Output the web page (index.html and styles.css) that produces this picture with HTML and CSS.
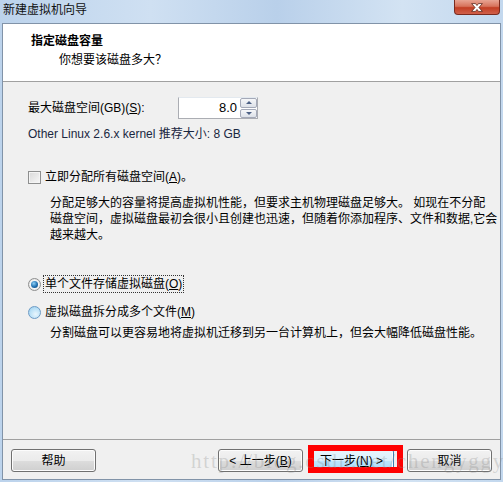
FILE: index.html
```html
<!DOCTYPE html>
<html>
<head>
  <meta charset="utf-8">
  <title>新建虚拟机向导</title>
  <link rel="stylesheet" href="styles.css">
</head>
<body>
  <div class="window">
    <div class="titleBar">
      <span class="title">新建虚拟机向导</span>
      <span class="closeButton">
        <svg width="45" height="15" viewBox="0 0 45 15">
          <path d="M17 3.5 L21 3.5 L22.5 5.5 L24 3.5 L28 3.5 L24.5 7.5 L28 11.5 L24 11.5 L22.5 9.5 L21 11.5 L17 11.5 L20.5 7.5 Z" fill="#ffffff" stroke="#5a2418" stroke-width="0.8" stroke-linejoin="round"/>
        </svg>
      </span>
    </div>

    <div class="client">
      <div class="header">
        <h1 class="heading">指定磁盘容量</h1>
        <p class="subheading">你想要该磁盘多大？</p>
      </div>

      <div class="content">
        <div class="sizeRow">
          <span class="sizeLabel">最大磁盘空间(GB)(<u>S</u>):</span>
          <div class="spin">
            <span class="spinValue">8.0</span>
            <span class="spinButtons">
              <span class="spinButton"><span class="arrowUp"></span></span>
              <span class="spinButton"><span class="arrowDown"></span></span>
            </span>
          </div>
        </div>
        <p class="hint">Other Linux 2.6.x kernel 推荐大小: 8 GB</p>

        <div class="option checkOption">
          <span class="checkbox"></span>
          <span class="optionLabel">立即分配所有磁盘空间(<u>A</u>)。</span>
        </div>
        <p class="desc">分配足够大的容量将提高虚拟机性能，但要求主机物理磁盘足够大。 如现在不分配<br>磁盘空间，虚拟磁盘最初会很小且创建也迅速，但随着你添加程序、文件和数据,它会<br>越来越大。</p>

        <div class="option radioFirst">
          <span class="radio radioOn"><span class="radioDot"></span></span>
          <span class="optionLabel focused">单个文件存储虚拟磁盘(<u>O</u>)</span>
        </div>
        <div class="option radioSecond">
          <span class="radio radioOff"></span>
          <span class="optionLabel">虚拟磁盘拆分成多个文件(<u>M</u>)</span>
        </div>
        <p class="desc descShort">分割磁盘可以更容易地将虚拟机迁移到另一台计算机上，但会大幅降低磁盘性能。</p>
      </div>

      <div class="footer">
        <button class="button">帮助</button>
        <div class="navButtons">
          <button class="button">&lt; 上一步(<u>B</u>)</button>
          <button class="button nextButton">下一步(<u>N</u>) &gt;</button>
          <button class="button cancelButton">取消</button>
        </div>
      </div>
    </div>

    <div class="watermark">http://blog.csdn.net/chengyggy</div>
  </div>
</body>
</html>
```

FILE: styles.css
```css
*,
*::before,
*::after {
  margin: 0;
  padding: 0;
  box-sizing: border-box;
}

body {
  width: 503px;
  height: 482px;
  overflow: hidden;
  font-family: "Liberation Sans", "Noto Sans CJK SC", sans-serif;
  font-size: 12px;
  line-height: 16px;
  color: #000;
}

.window {
  position: relative;
  width: 503px;
  height: 482px;
  background: linear-gradient(90deg, #bcd3ec 0%, #cfe0f2 30%, #b9d0ea 55%, #d3e3f3 80%, #c3d8ee 100%);
}

/* title bar */
.titleBar {
  height: 23px;
  display: flex;
  justify-content: space-between;
  align-items: flex-start;
}

.title {
  padding-left: 3px;
  padding-top: 2px;
  font-size: 12px;
  line-height: 16px;
  color: #111;
}

.closeButton {
  width: 46px;
  height: 15px;
  margin-right: 3px;
  border: 1px solid #7a2a1e;
  border-top: none;
  border-radius: 0 0 4px 4px;
  background: linear-gradient(#e8a493 0%, #d7735c 45%, #c23e24 55%, #d0604a 100%);
  display: flex;
  align-items: center;
  justify-content: center;
}

.closeButton svg {
  display: block;
}

/* client area */
.client {
  width: 499px;
  height: 457px;
  margin-left: 2px;
  border: 1px solid #8193a8;
  background-color: #f0f0f0;
  display: flex;
  flex-direction: column;
}

.header {
  height: 58px;
  background-color: #fff;
  border-bottom: 1px solid #a0a0a0;
  padding-top: 9px;
}

.heading {
  font-size: 12px;
  font-weight: bold;
  line-height: 16px;
  margin-left: 28px;
}

.subheading {
  margin-top: 3px;
  margin-left: 56px;
}

.content {
  flex: 1;
  padding-top: 15px;
  padding-left: 25px;
}

.sizeRow {
  display: flex;
  align-items: center;
  height: 22px;
}

.sizeLabel {
  width: 150px;
}

.spin {
  display: flex;
  height: 22px;
  width: 80px;
  border: 1px solid #abadb3;
  border-top-color: #e3e9ef;
  background-color: #fff;
}

.spinValue {
  flex: 1;
  text-align: right;
  padding-right: 3px;
  line-height: 20px;
  font-size: 13px;
}

.spinButtons {
  width: 17px;
  display: flex;
  flex-direction: column;
  gap: 1px;
  background-color: #fff;
}

.spinButton {
  flex: 1;
  border: 1px solid #a4a9b8;
  border-radius: 2px;
  background: linear-gradient(#f6f7f9, #dde1e8);
  display: flex;
  align-items: center;
  justify-content: center;
}

.arrowUp {
  border-left: 3px solid transparent;
  border-right: 3px solid transparent;
  border-bottom: 3px solid #4d6185;
}

.arrowDown {
  border-left: 3px solid transparent;
  border-right: 3px solid transparent;
  border-top: 3px solid #4d6185;
}

.hint {
  margin-top: 7px;
  color: #1a2740;
}

.option {
  display: flex;
  align-items: center;
  height: 16px;
}

.checkOption {
  margin-top: 27px;
}

.checkbox {
  width: 13px;
  height: 13px;
  border: 1px solid #8e8f8f;
  background: linear-gradient(135deg, #d9d9d9, #f7f7f7);
  box-shadow: inset 0 0 0 1px #f4f4f4;
  margin-right: 3px;
}

.optionLabel {
  padding: 0 1px;
}

.focused {
  outline: 1px dotted #333;
  outline-offset: 0;
  line-height: 16px;
}

.desc {
  margin-top: 10px;
  margin-left: 22px;
}

.radioFirst {
  margin-top: 33px;
}

.radioSecond {
  margin-top: 12px;
}

.descShort {
  margin-top: 5px;
}

.radio {
  width: 13px;
  height: 13px;
  border-radius: 50%;
  margin-right: 3px;
  display: flex;
  align-items: center;
  justify-content: center;
}

.radioOn {
  border: 1px solid #8e8f8f;
  background: radial-gradient(circle, #ffffff 40%, #cfcfcf 100%);
}

.radioDot {
  width: 7px;
  height: 7px;
  border-radius: 50%;
  background: radial-gradient(circle at 40% 35%, #8fd0f5 0%, #1f6fb0 55%, #0c3a6b 100%);
}

.radioOff {
  border: 1px solid #6d9bc5;
  background: radial-gradient(circle at 60% 65%, #e9f6fd 0%, #b7dff6 60%, #8ec6ea 100%);
}

/* footer buttons */
.footer {
  height: 40px;
  border-top: 1px solid #a0a0a0;
  padding: 9px 8px 0 8px;
  display: flex;
  justify-content: space-between;
  align-items: flex-start;
}

.navButtons {
  display: flex;
  align-items: flex-start;
  gap: 6px;
}

.button {
  width: 85px;
  height: 23px;
  padding: 0;
  border: 1px solid #707070;
  border-radius: 3px;
  background: linear-gradient(#f2f2f2 0%, #ebebeb 50%, #dddddd 51%, #cfcfcf 100%);
  box-shadow: inset 0 0 0 1px #fcfcfc;
  font-family: "Liberation Sans", "Noto Sans CJK SC", sans-serif;
  font-size: 12px;
  line-height: 16px;
  color: #000;
}

.nextButton {
  position: relative;
  border-color: #3c7fb1;
  background: linear-gradient(#e8f5fc 0%, #d9f0fc 50%, #bee6fd 51%, #a7d9f5 100%);
}

/* red highlight frame drawn over the default button */
.nextButton::after {
  content: "";
  position: absolute;
  left: -2px;
  top: -5px;
  width: 95px;
  height: 28px;
  border: 6px solid #ff0000;
}

.cancelButton {
  margin-left: 7px;
}

/* faint watermark laid over the footer */
.watermark {
  position: absolute;
  left: 191px;
  top: 449px;
  font-family: "Liberation Serif", serif;
  font-size: 21px;
  letter-spacing: 1.8px;
  line-height: 24px;
  color: rgba(140, 140, 140, 0.3);
  pointer-events: none;
}
```
